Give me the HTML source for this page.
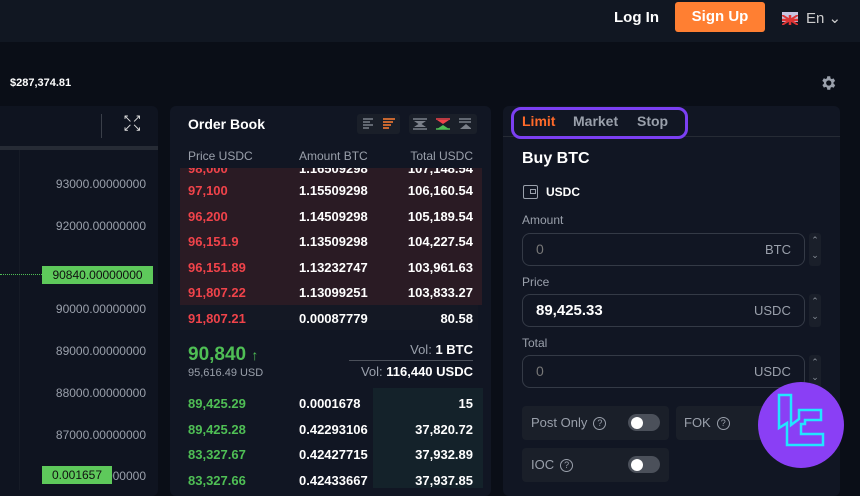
<!DOCTYPE html><html><head><style>
*{margin:0;padding:0;box-sizing:border-box}
body{width:860px;height:484px;background:#0a0e17;font-family:"Liberation Sans",sans-serif;color:#fff;position:relative;overflow:hidden}
.a{position:absolute;white-space:nowrap}
.hdr{position:absolute;left:0;top:0;width:860px;height:42px;background:#111722}
.panel{position:absolute;background:#111623;border-radius:6px}
.g{color:#9aa0ab}
.red{color:#f0434a}.grn{color:#4fbf55}
.inp{position:absolute;left:522px;width:283px;height:33px;border:1px solid #343a46;border-radius:8px}
.sp{position:absolute;left:809px;width:12px;height:33px;background:#1a1f2a;border-radius:3px;color:#8a909a;font-size:9px;text-align:center;line-height:15px}
.box{position:absolute;background:#1a1f29;border-radius:4px;height:34px}
.tog{position:absolute;width:32px;height:17px;background:#4b505a;border-radius:9px}
.tog:after{content:"";position:absolute;left:3px;top:2.5px;width:12px;height:12px;border-radius:50%;background:#fff}
.q{display:inline-block;width:13px;height:13px;border:1.5px solid #9aa0ab;border-radius:50%;font-size:9px;text-align:center;line-height:10px;vertical-align:1px;margin-left:6px}
.row{display:flex;justify-content:space-between}
</style></head><body>
<div class="hdr"></div>
<div class="a" style="left:614px;top:9px;font-size:15px;font-weight:bold">Log In</div>
<div class="a" style="left:675px;top:2px;width:90px;height:30px;background:#ff7f32;border-radius:3px;text-align:center;line-height:30px;font-size:15px;font-weight:bold">Sign Up</div>
<div class="a" style="left:782px;top:12px;width:16px;height:10px;background:#c8c4e0"><svg width="16" height="10"><path d="M0 0L16 10M16 0L0 10" stroke="#d33" stroke-width="2"/><path d="M8 0V10M0 5H16" stroke="#d33" stroke-width="2.5"/></svg></div>
<div class="a g" style="left:806px;top:9px;font-size:15px;color:#ccc">En ⌄</div>
<div class="a" style="left:10px;top:77px;font-size:11px;font-weight:bold">$287,374.81</div>
<svg class="a" style="left:819px;top:74px" width="18" height="18" viewBox="0 0 24 24"><path fill="#9aa0ab" d="M19.4 13a7.5 7.5 0 000-2l2.1-1.6-2-3.5-2.5 1a7 7 0 00-1.7-1L15 3h-4l-.4 2.7a7 7 0 00-1.7 1l-2.5-1-2 3.5L6.6 11a7.5 7.5 0 000 2l-2.1 1.6 2 3.5 2.5-1a7 7 0 001.7 1L11 21h4l.4-2.7a7 7 0 001.7-1l2.5 1 2-3.5zM13 15.5a3.5 3.5 0 110-7 3.5 3.5 0 010 7z"/></svg>
<!-- chart -->
<div class="panel" style="left:-6px;top:106px;width:164px;height:390px;background:#0f1420"></div>
<div class="a" style="left:0;top:146px;width:158px;height:4px;background:#262b35"></div>
<div class="a" style="left:101px;top:114px;width:1px;height:24px;background:#3a3f49"></div>
<div class="a" style="left:123px;top:115px;font-size:11px;color:#ddd;line-height:9px">↖↗<br>↙↘</div>
<div class="a" style="left:19px;top:150px;width:1px;height:340px;background:#161b26"></div>
<div class="a g" style="right:714px;top:178px;font-size:12px;line-height:1">93000.00000000</div>
<div class="a g" style="right:714px;top:220px;font-size:12px;line-height:1">92000.00000000</div>
<div class="a g" style="right:714px;top:303px;font-size:12px;line-height:1">90000.00000000</div>
<div class="a g" style="right:714px;top:345px;font-size:12px;line-height:1">89000.00000000</div>
<div class="a g" style="right:714px;top:387px;font-size:12px;line-height:1">88000.00000000</div>
<div class="a g" style="right:714px;top:429px;font-size:12px;line-height:1">87000.00000000</div>
<div class="a g" style="right:714px;top:470px;font-size:12px;line-height:1">86000.00000000</div>
<div class="a" style="left:0;top:274px;width:42px;border-top:1px dotted #4fbf55"></div>
<div class="a" style="left:42px;top:266px;width:111px;height:18px;background:#5ec95b;color:#111;font-size:12px;text-align:center;line-height:18px">90840.00000000</div>
<div class="a" style="left:42px;top:466px;width:70px;height:18px;background:#5ec95b;color:#111;font-size:12px;text-align:center;line-height:18px">0.001657</div>
<!-- order book -->
<div class="panel" style="left:170px;top:106px;width:321px;height:390px"></div>
<div class="a" style="left:188px;top:116px;font-size:14px;font-weight:bold">Order Book</div>
<div class="a" style="left:357px;top:114px;width:43px;height:20px;background:#1a1f29;border-radius:3px"></div>
<div class="a" style="left:409px;top:114px;width:68px;height:20px;background:#1a1f29;border-radius:3px"></div>
<svg class="a" style="left:361px;top:117px" width="110" height="14"><g stroke-width="1.5"><path d="M2 2h10M2 5h7M2 8h10M2 11h6" stroke="#7b808a"/><path d="M22 2h12M22 5h10M22 8h8M22 11h6" stroke="#ff7f32"/><path d="M52 2h14M52 12h14" stroke="#7b808a"/><path d="M53 4l6 4 6-4z" fill="#7b808a"/><path d="M53 10l6-4 6 4z" fill="#7b808a"/><path d="M75 2h14" stroke="#f0434a"/><path d="M76 3l6 4 6-4z" fill="#f0434a"/><path d="M76 12l6-4 6 4z" fill="#4fbf55"/><path d="M75 12h14" stroke="#4fbf55"/><path d="M98 2h14M98 5h14" stroke="#7b808a"/><path d="M99 12l6-5 6 5z" fill="#7b808a"/></g></svg>
<div class="a g" style="left:188px;top:149px;font-size:12px">Price USDC</div>
<div class="a g" style="left:299px;top:149px;font-size:12px">Amount BTC</div>
<div class="a g" style="right:387px;top:149px;font-size:12px">Total USDC</div>
<div class="a" style="left:180px;top:168px;width:302px;height:137px;background:#2a1b24"></div>
<div class="a" style="left:180px;top:305px;width:298px;height:25px;background:#141824"></div>
<div style="position:absolute;left:188px;top:168px;width:285px;height:10px;overflow:hidden;font-size:13px;font-weight:bold;line-height:1">
<div class="row" style="margin-top:-6px"><span class="red" style="width:111px">98,000</span><span style="flex:1">1.16509298</span><span>107,148.54</span></div></div>
<div style="position:absolute;left:188px;top:178px;width:285px;font-size:13px;font-weight:bold;line-height:25.5px">
<div class="row"><span class="red" style="width:111px">97,100</span><span style="flex:1">1.15509298</span><span>106,160.54</span></div>
<div class="row"><span class="red" style="width:111px">96,200</span><span style="flex:1">1.14509298</span><span>105,189.54</span></div>
<div class="row"><span class="red" style="width:111px">96,151.9</span><span style="flex:1">1.13509298</span><span>104,227.54</span></div>
<div class="row"><span class="red" style="width:111px">96,151.89</span><span style="flex:1">1.13232747</span><span>103,961.63</span></div>
<div class="row"><span class="red" style="width:111px">91,807.22</span><span style="flex:1">1.13099251</span><span>103,833.27</span></div>
<div class="row"><span class="red" style="width:111px">91,807.21</span><span style="flex:1">0.00087779</span><span>80.58</span></div>
</div>
<div class="a grn" style="left:188px;top:344px;font-size:19px;font-weight:bold">90,840 <span style="font-size:14px">↑</span></div>
<div class="a g" style="left:188px;top:367px;font-size:11px">95,616.49 USD</div>
<div class="a" style="right:387px;top:342px;font-size:13px"><span class="g">Vol:</span> <b>1 BTC</b></div>
<div class="a" style="left:349px;top:360px;width:124px;height:1px;background:#4b505a"></div>
<div class="a" style="right:387px;top:364px;font-size:13px"><span class="g">Vol:</span> <b>116,440 USDC</b></div>
<div class="a" style="left:373px;top:388px;width:110px;height:100px;background:#14222a"></div>
<div style="position:absolute;left:188px;top:391px;width:285px;font-size:13px;font-weight:bold;line-height:25.5px">
<div class="row"><span class="grn" style="width:111px">89,425.29</span><span style="flex:1">0.0001678</span><span>15</span></div>
<div class="row"><span class="grn" style="width:111px">89,425.28</span><span style="flex:1">0.42293106</span><span>37,820.72</span></div>
<div class="row"><span class="grn" style="width:111px">83,327.67</span><span style="flex:1">0.42427715</span><span>37,932.89</span></div>
<div class="row"><span class="grn" style="width:111px">83,327.66</span><span style="flex:1">0.42433667</span><span>37,937.85</span></div>
</div>
<!-- right panel -->
<div class="panel" style="left:503px;top:106px;width:337px;height:390px"></div>
<div class="a" style="left:503px;top:136px;width:337px;height:1px;background:#262b35"></div>
<div class="a" style="left:511px;top:107px;width:177px;height:32px;border:3.5px solid #7b3ff2;border-radius:10px"></div>
<div class="a" style="left:522px;top:113px;font-size:14px;font-weight:bold;color:#ff6a2a">Limit</div>
<div class="a g" style="left:573px;top:113px;font-size:14px;font-weight:bold">Market</div>
<div class="a g" style="left:637px;top:113px;font-size:14px;font-weight:bold">Stop</div>
<div class="a" style="left:522px;top:150px;font-size:16px;font-weight:bold">Buy BTC</div>
<div class="a" style="left:523px;top:185px;width:15px;height:14px;border:1.5px solid #9aa0ab;border-radius:2px"><div style="position:absolute;right:1px;top:3px;width:6px;height:5px;border:1.5px solid #9aa0ab"></div></div>
<div class="a" style="left:546px;top:185px;font-size:12px;font-weight:bold">USDC</div>
<div class="a g" style="left:522px;top:213px;font-size:12px">Amount</div>
<div class="inp" style="top:233px"></div><div class="a" style="left:536px;top:241px;font-size:14px;color:#777">0</div><div class="a g" style="left:765px;top:242px;font-size:13px">BTC</div>
<div class="sp" style="top:233px">⌃<br>⌄</div>
<div class="a g" style="left:522px;top:275px;font-size:12px">Price</div>
<div class="inp" style="top:294px"></div><div class="a" style="left:536px;top:302px;font-size:15px;font-weight:bold">89,425.33</div><div class="a g" style="left:754px;top:303px;font-size:13px">USDC</div>
<div class="sp" style="top:294px">⌃<br>⌄</div>
<div class="a g" style="left:522px;top:336px;font-size:12px">Total</div>
<div class="inp" style="top:355px"></div><div class="a" style="left:536px;top:363px;font-size:14px;color:#777">0</div><div class="a g" style="left:754px;top:364px;font-size:13px">USDC</div>
<div class="sp" style="top:355px">⌃<br>⌄</div>
<div class="box" style="left:522px;top:406px;width:147px"></div>
<div class="a g" style="left:531px;top:415px;font-size:13px">Post Only<span class="q">?</span></div>
<div class="tog" style="left:628px;top:414px"></div>
<div class="box" style="left:676px;top:406px;width:130px"></div>
<div class="a g" style="left:684px;top:415px;font-size:13px">FOK<span class="q">?</span></div>
<div class="box" style="left:522px;top:448px;width:147px"></div>
<div class="a g" style="left:531px;top:457px;font-size:13px">IOC<span class="q">?</span></div>
<div class="tog" style="left:628px;top:456px"></div>
<div class="a" style="left:758px;top:382px;width:86px;height:86px;border-radius:50%;background:#8a3ff5"></div>
<svg class="a" style="left:758px;top:382px" width="86" height="86"><path d="M21 13h12v30l8-6V28h22v10H47v4h-4v10h22v11H29V41l-8 5z" fill="none" stroke="#22e6ff" stroke-width="2.5" stroke-linejoin="miter"/></svg>
</body></html>
